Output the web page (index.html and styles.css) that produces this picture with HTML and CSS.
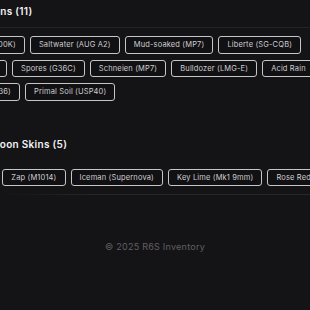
FILE: index.html
```html
<!DOCTYPE html>
<html>
<head>
    <title>R6S Inventory</title>
    <link rel="stylesheet" href="styles.css">
</head>
<body>
    <main class="inventory">
        <section class="category">
            <h2 class="category-title lined">Weapons (11)</h2>
            <div class="tags">
                <span class="tag">Oils (400K)</span>
                <span class="tag">Saltwater (AUG A2)</span>
                <span class="tag">Mud-soaked (MP7)</span>
                <span class="tag">Liberte (SG-CQB)</span>
                <span class="tag">Ivy (4)</span>
                <span class="tag">Spores (G36C)</span>
                <span class="tag">Schneien (MP7)</span>
                <span class="tag">Bulldozer (LMG-E)</span>
                <span class="tag">Acid Rain</span>
                <span class="tag">Firs (G36)</span>
                <span class="tag">Primal Soil (USP40)</span>
            </div>
        </section>

        <section class="category second">
            <h2 class="category-title">Blue Moon Skins (5)</h2>
            <div class="tags">
                <span class="tag">Ace</span>
                <span class="tag">Zap (M1014)</span>
                <span class="tag">Iceman (Supernova)</span>
                <span class="tag">Key Lime (Mk1 9mm)</span>
                <span class="tag">Rose Red (P9)</span>
            </div>
        </section>
    </main>

    <footer class="footer">
        <p>© 2025 R6S Inventory</p>
    </footer>
</body>
</html>
```

FILE: styles.css
```css
body {
    margin: 0;
    font-family: Inter, "Open Sans", sans-serif;
    background-color: #141316;
    color: #d4d4d6;
    display: flex;
    flex-direction: column;
    align-items: center;
    min-height: 100vh;
    overflow: hidden;
}

.inventory {
    width: 380px;
    flex-shrink: 0;
    padding-top: 4px;
}

.category-title {
    margin: 0;
    font-size: 10px;
    line-height: 14px;
    font-weight: 600;
    letter-spacing: 0.3px;
    color: #f2f2f3;
}

.category-title.lined {
    padding-bottom: 9px;
    border-bottom: 1px solid #242327;
    margin-bottom: 8px;
}

.second {
    margin-top: 36px;
}

.second .category-title {
    margin-bottom: 18px;
}

.tags {
    display: flex;
    flex-wrap: wrap;
    gap: 6px 5px;
}

.tag {
    font-size: 7.5px;
    line-height: 11.5px;
    letter-spacing: 0.15px;
    padding: 2px 8px;
    border: 1.5px solid #c6c6c8;
    border-radius: 3px;
    background-color: #111013;
    color: #cfcfd1;
    white-space: nowrap;
}

.footer {
    width: 100%;
    margin-top: 8px;
    border-top: 1px solid transparent;
    border-image: linear-gradient(to right, #141316, #26252a 30%, #26252a) 1;
    text-align: center;
}

.footer p {
    margin: 0;
    padding-top: 45px;
    font-size: 9px;
    line-height: 14px;
    letter-spacing: 0.25px;
    color: #616065;
}
```
